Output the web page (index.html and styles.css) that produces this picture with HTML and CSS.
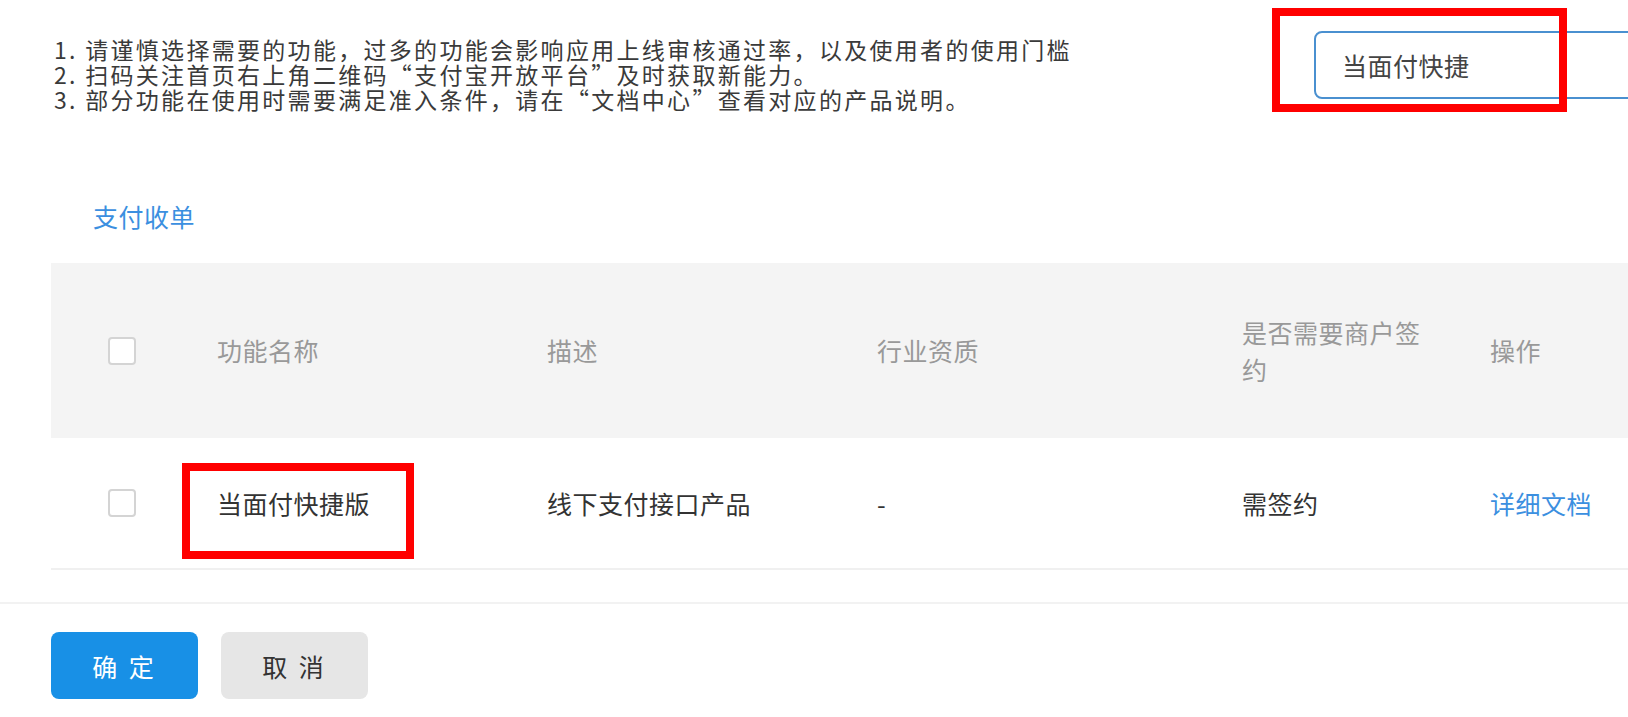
FILE: index.html
```html
<!DOCTYPE html>
<html lang="zh-CN">
<head>
  <meta charset="UTF-8">
  <meta name="viewport" content="width=device-width, initial-scale=1.0">
  <title>添加功能</title>
  <link rel="stylesheet" href="styles.css">
</head>
<body>
  <div class="page">
    <!-- Tips + search -->
    <div class="top">
      <ol class="tips">
        <li>1. 请谨慎选择需要的功能，过多的功能会影响应用上线审核通过率，以及使用者的使用门槛</li>
        <li>2. 扫码关注首页右上角二维码“支付宝开放平台”及时获取新能力。</li>
        <li>3. 部分功能在使用时需要满足准入条件，请在“文档中心”查看对应的产品说明。</li>
      </ol>
      <div class="search">
        <input type="text" class="search-input" value="当面付快捷">
        <div class="mark mark-search"></div>
      </div>
    </div>

    <!-- Category -->
    <div class="category">支付收单</div>

    <!-- Feature table -->
    <div class="table">
      <div class="row thead">
        <div class="cell check-cell"><span class="checkbox"></span></div>
        <div class="cell">功能名称</div>
        <div class="cell">描述</div>
        <div class="cell">行业资质</div>
        <div class="cell">是否需要商户签约</div>
        <div class="cell last-cell">操作</div>
      </div>
      <div class="row tbody">
        <div class="cell check-cell"><span class="checkbox"></span></div>
        <div class="cell name-cell">
          当面付快捷版
          <div class="mark mark-name"></div>
        </div>
        <div class="cell">线下支付接口产品</div>
        <div class="cell">-</div>
        <div class="cell">需签约</div>
        <div class="cell last-cell"><a class="link" href="#">详细文档</a></div>
      </div>
    </div>
  </div>

  <!-- Actions -->
  <div class="footer">
    <button class="btn btn-primary">确 定</button>
    <button class="btn btn-default">取 消</button>
  </div>
</body>
</html>
```

FILE: styles.css
```css
body {
  margin: 0;
  font-family: "Noto Sans CJK SC", "Microsoft YaHei", sans-serif;
  font-size: 25px;
  letter-spacing: 0.5px;
  color: #333;
  background: #fff;
  overflow: hidden;
}
.page {
  padding: 31px 0 0 51px;
}
.top {
  display: flex;
}
.tips {
  width: 1260px;
  flex: none;
  margin: 6px 0 0;
  padding: 0 0 0 3px;
  list-style: none;
  font-size: 23px;
  letter-spacing: 2.3px;
  line-height: 25px;
  color: #3a3a3a;
}
.search {
  position: relative;
  flex: none;
}
.search-input {
  width: 420px;
  height: 68px;
  box-sizing: border-box;
  padding: 0 26px;
  border: 2px solid #4a90d0;
  border-radius: 8px;
  font: inherit;
  letter-spacing: inherit;
  color: #444;
  outline: none;
}
.mark {
  position: absolute;
  box-sizing: border-box;
  border: 8px solid #f00;
  pointer-events: none;
}
.mark-search {
  left: -42px;
  top: -23px;
  width: 295px;
  height: 104px;
}
.category {
  margin: 89px 0 0 42px;
  line-height: 30px;
  color: #3b8fe0;
}
.table {
  margin-top: 32px;
}
.row {
  display: grid;
  grid-template-columns: 166px 330px 330px 365px 248px 1fr;
}
.thead {
  height: 175px;
  background: #f4f4f4;
  color: #999;
}
.tbody {
  height: 132px;
  box-sizing: border-box;
  border-bottom: 2px solid #f0f0f0;
}
.cell {
  display: flex;
  align-items: center;
  padding-right: 60px;
  line-height: 37px;
}
.last-cell {
  padding-right: 0;
  white-space: nowrap;
}
.check-cell {
  padding-left: 57px;
}
.checkbox {
  display: block;
  width: 28px;
  height: 28px;
  box-sizing: border-box;
  border: 2px solid #d4d4d4;
  border-radius: 4px;
  background: #fff;
}
.name-cell {
  position: relative;
}
.mark-name {
  left: -35px;
  top: 25px;
  width: 232px;
  height: 96px;
}
.link {
  color: #3b8fe0;
  text-decoration: none;
}
.footer {
  display: flex;
  gap: 23px;
  margin-top: 32px;
  padding: 28px 0 0 51px;
  border-top: 2px solid #f2f2f2;
}
.btn {
  width: 147px;
  height: 67px;
  border: none;
  border-radius: 8px;
  font: inherit;
  letter-spacing: 3px;
  cursor: pointer;
}
.btn-primary {
  background: #1890e6;
  color: #fff;
}
.btn-default {
  background: #e6e6e6;
  color: #333;
}
```
